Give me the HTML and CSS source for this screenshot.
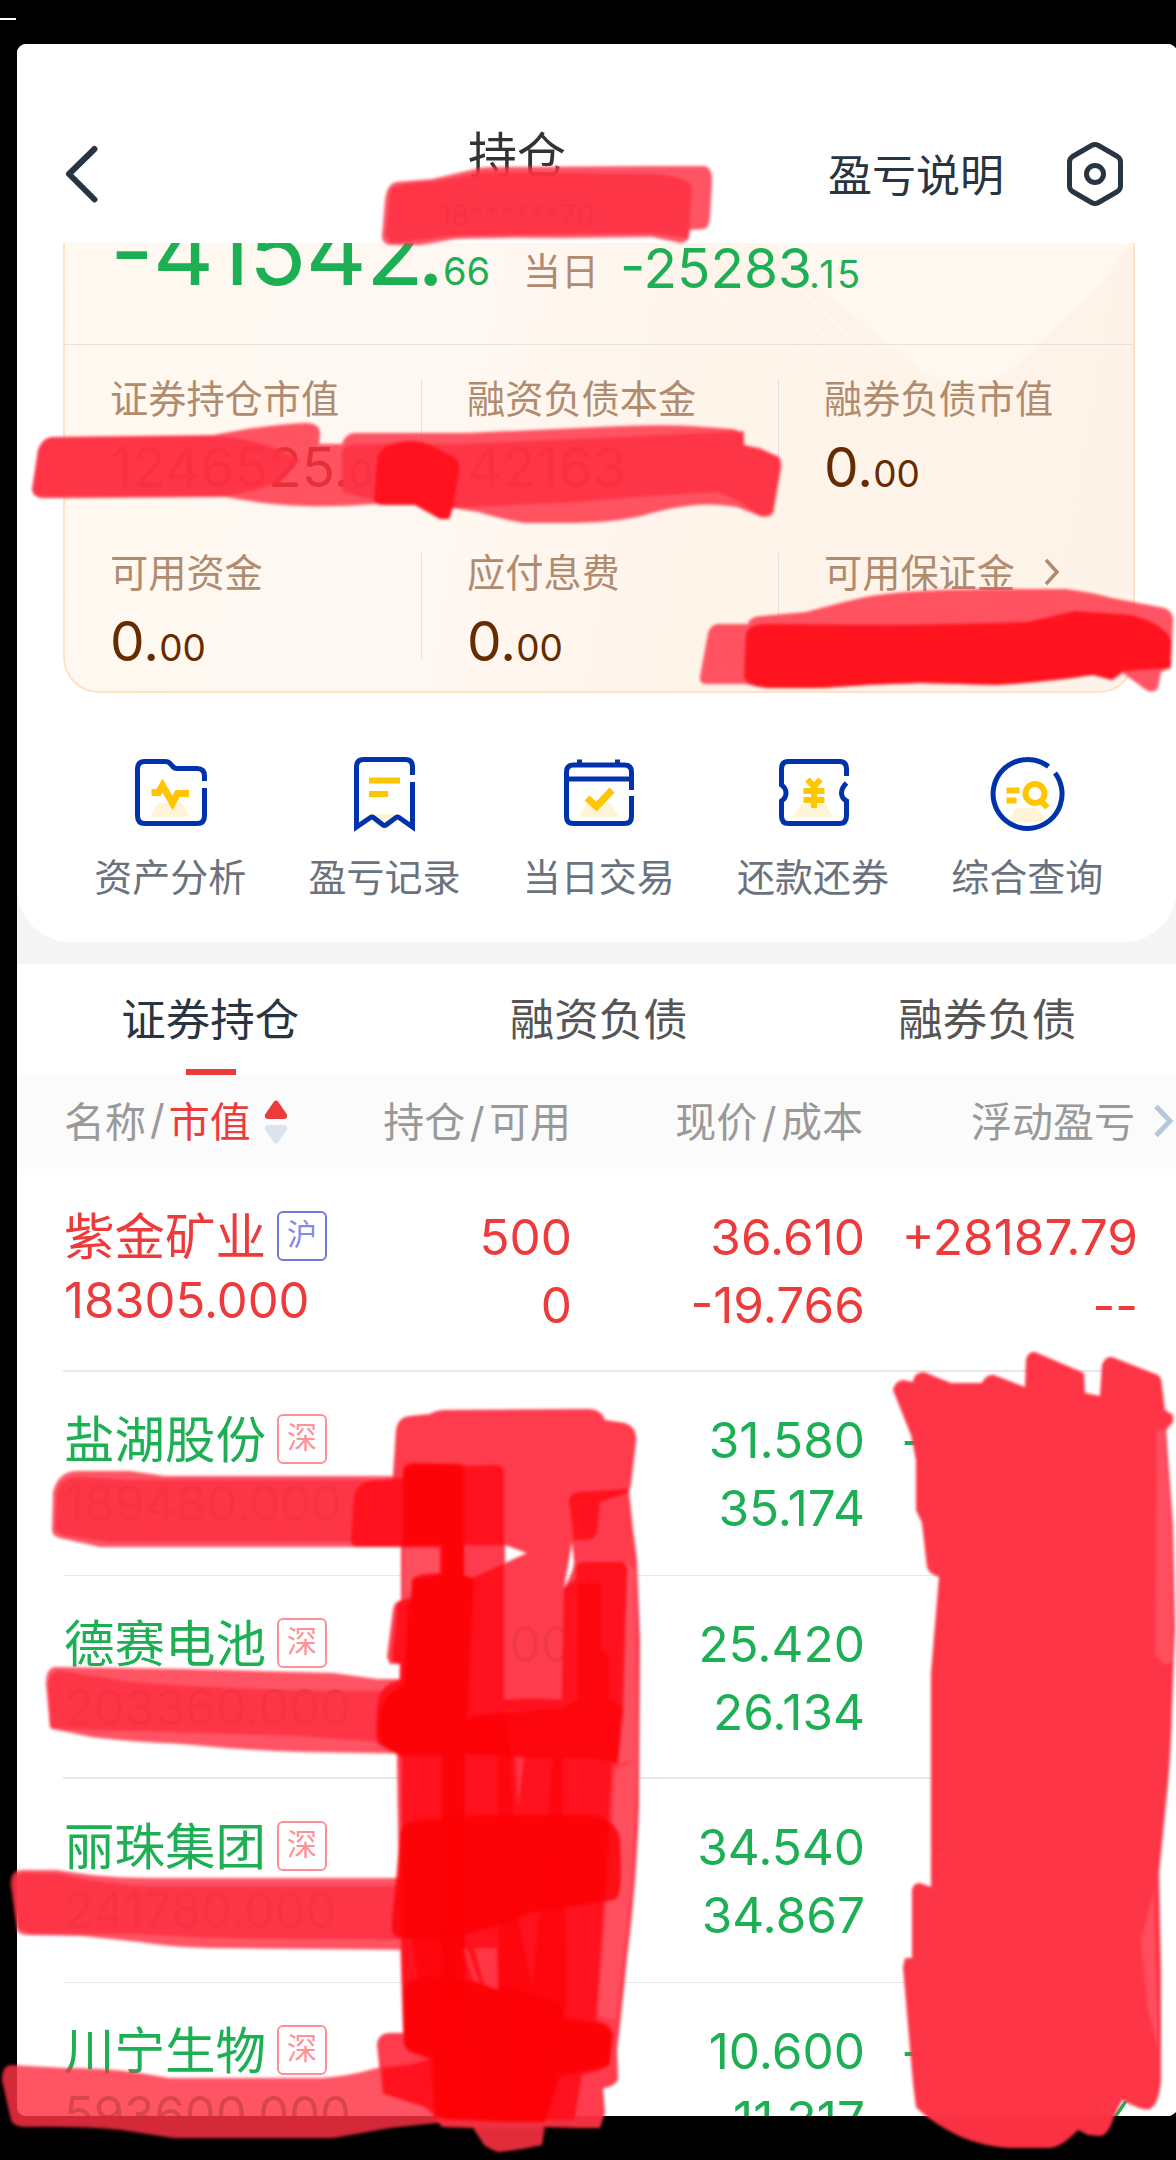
FILE: index.html
```html
<!DOCTYPE html>
<html lang="zh-CN">
<head>
<meta charset="utf-8">
<title>持仓</title>
<link rel="stylesheet" href="styles.css">
</head>
<body>
<i class="tick"></i>
<main class="screen">
  <header class="nav">
    <svg class="back" width="34" height="60" viewBox="0 0 34 60"><path d="M29.500 5L4 30l25.500 25.500"/></svg>
    <div class="title"><h1>持仓</h1><p>18******70</p></div>
    <div class="nav-right">
      <span>盈亏说明</span>
      <svg class="hex" width="58" height="66" viewBox="0 0 58 66"><path d="M25.500 4.500q3.500-2 7 0l19 11q3 2 3 5.500v24q0 3.500-3 5.500l-19 11q-3.500 2-7 0l-19-11q-3-2-3-5.500V21q0-3.500 3-5.500z"/><circle cx="29" cy="33" r="8.500"/></svg>
    </div>
  </header>

  <div class="top">
    <section class="card">
      <svg class="deco" width="1070" height="450" viewBox="0 0 1070 450">
        <path class="gem" d="M700 0L758 48L860 130Q905 154 945 128L1035 42L1064 0z"/>
        <path class="ray" d="M610 0Q650 62 735 110M650 0Q680 60 760 110M672 0Q705 58 785 110M702 0Q740 60 805 110"/>
      </svg>
      <div class="pnl">
        <b>-41542<span class="dot">.</span></b><span class="cents">66</span><span class="day">当日</span><span class="today">-25283</span><span class="today-c">.15</span>
      </div>
      <div class="grid">
        <div class="cell"><label>证券持仓市值</label><p>1246525.<small>00</small></p></div>
        <div class="cell"><label>融资负债本金</label><p>42163</p></div>
        <div class="cell"><label>融券负债市值</label><p>0.<small>00</small></p></div>
        <div class="cell"><label>可用资金</label><p>0.<small>00</small></p></div>
        <div class="cell"><label>应付息费</label><p>0.<small>00</small></p></div>
        <div class="cell"><label>可用保证金<svg width="16" height="28" viewBox="0 0 16 28"><path d="M2 2l11 12L2 26"/></svg></label><p></p></div>
      </div>
    </section>

    <nav class="tools">
      <a><svg width="80" height="80" viewBox="0 0 80 80">
        <path class="glow" d="M28 49h24l8 14H20z"/>
        <path class="line" d="M74.500 27V22q0-7.500-7.500-7.500H47q-3 0-5-3l-2-2Q38.500 7.500 35 7.500H15Q7.500 7.500 7.500 15v47q0 7.500 7.500 7.500h52q7.500 0 7.500-7.500V34"/>
        <path class="gold" d="M21.500 38.500h7l4-7 10 17.500 5-9.500h11.500"/></svg><span>资产分析</span></a>
      <a><svg width="80" height="80" viewBox="0 0 80 80">
        <path class="glow" d="M24 60h32l-8 12-8 3-8-3z"/>
        <path class="line" d="M68.500 21V13q0-7.500-7-7.500h-42q-7 0-7 7.500v60l14-9.500q1.500-1 3 0l9.500 7.500q1.500 1 3 0L52 63.500q1.500-1 3 0l13.500 9.500V28"/>
        <path class="gold slim" d="M25 26.500h31M25 40h19"/></svg><span>盈亏记录</span></a>
      <a><svg width="80" height="80" viewBox="0 0 80 80">
        <path class="glow" d="M28 49h24l8 14H20z"/>
        <path class="line" d="M72.500 36V18q0-7-7-7h-51q-7 0-7 7v44.500q0 7 7 7h51q7 0 7-7V42M7.500 25h65M20.500 11V5.500M58.500 11V5.500"/>
        <path class="gold" d="M28 44l9.500 8.500L53 36"/></svg><span>当日交易</span></a>
      <a><svg width="80" height="80" viewBox="0 0 80 80">
        <path class="glow" d="M28 50h24l8 13H20z"/>
        <path class="line" d="M73.500 22V15q0-7.500-7-7.500h-51q-7 0-7 7.500v16q4.500 3 4.500 8t-4.500 8v15q0 7.500 7 7.500h51q7 0 7-7.500V47q-5-3-5-8t5-10"/>
        <path class="gold slim" d="M34.500 25.500l6.500 7 6.500-7M30.500 37h21M30.500 46h21M41 32v22"/></svg><span>还款还券</span></a>
      <a><svg width="80" height="80" viewBox="0 0 80 80">
        <path class="glow" d="M29 54h22l9 14H20z"/>
        <path class="line" d="M61.500 12.500A34.500 34.500 0 1 0 68 19"/>
        <path class="gold slim" d="M19.500 36.500h13M19.500 46.500h10M54 47l6.500 6.500"/><circle class="gold slim" cx="48" cy="39.500" r="9.500"/></svg><span>综合查询</span></a>
    </nav>
  </div>

  <nav class="tabs"><span class="on">证券持仓</span><span>融资负债</span><span>融券负债</span></nav>

  <div class="cols head">
    <div class="c1">名称<i>/</i><em>市值</em><svg width="24" height="44" viewBox="0 0 24 44"><path fill="#ed3b3b" d="M10 1.500q2-2 4 0l9 13q1 4-3 4.500H4q-4-.5-3-4.500z"/><path fill="#dbe4ec" d="M10 42.500q2 2 4 0l9-13q1-4-3-4.500H4q-4 .5-3 4.500z"/></svg></div>
    <div>持仓<i>/</i>可用</div><div>现价<i>/</i>成本</div><div>浮动盈亏</div>
    <svg class="more" width="22" height="36" viewBox="0 0 22 36"><path d="M4 3.500l14 14.500L4 32.500"/></svg>
  </div>

  <section class="list">
    <article class="cols row up">
      <div class="c1"><h2>紫金矿业<span class="tag sh">沪</span></h2><p>18305.000</p></div>
      <div><p>500</p><p>0</p></div><div><p>36.610</p><p>-19.766</p></div><div><p class="gain">+28187.79</p><p>--</p></div>
    </article>
    <article class="cols row">
      <div class="c1"><h2>盐湖股份<span class="tag">深</span></h2><p>189480.000</p></div>
      <div></div><div><p>31.580</p><p>35.174</p></div><div><p class="neg">-</p></div>
    </article>
    <article class="cols row">
      <div class="c1"><h2>德赛电池<span class="tag">深</span></h2><p>203360.000</p></div>
      <div><p>00</p></div><div><p>25.420</p><p>26.134</p></div><div></div>
    </article>
    <article class="cols row">
      <div class="c1"><h2>丽珠集团<span class="tag">深</span></h2><p>241780.000</p></div>
      <div></div><div><p>34.540</p><p>34.867</p></div><div><p class="neg in">-</p></div>
    </article>
    <article class="cols row">
      <div class="c1"><h2>川宁生物<span class="tag">深</span></h2><p>593600.000</p></div>
      <div></div><div><p>10.600</p><p>11.317</p></div><div><p class="neg">-</p><p>%</p></div>
    </article>
  </section>
</main>

<svg class="marker" width="1176" height="2160" viewBox="0 0 1176 2160">
  <!-- account number -->
  <path class="m1" d="M382 236L385 200Q387 184 396 182L432 179L471 170Q480 167 490 167L660 166L704 166Q712 167 712 180L710 217Q709 228 704 229L690 230L689 238Q684 245 676 242L652 237L560 238Q500 237 455 239L421 245H390Q382 244 382 236z"/>
  <path class="m2" d="M386 236L390 190Q396 183 434 182L486 172L655 174Q692 178 692 188L688 238L652 233L560 234L450 236L392 243z"/>
  <!-- market value and principal -->
  <path class="m1" d="M32 490L38 450Q43 437 54 437L214 435Q270 424 308 423Q320 424 320 434L319 444H342Q345 434 354 433L467 433L600 427Q660 424 691 426L733 429Q744 431 744 445L760 448L779 457Q782 462 781 467L773 513Q768 519 760 516L737 507Q700 500 656 512Q620 523 576 523H524Q505 520 478 512L453 508L449 519H440L415 504H375Q340 507 306 506Q268 505 226 497L44 498Q34 498 32 490z"/>
  <path class="m2" d="M32 490L38 450Q43 437 54 437L214 436Q250 438 280 450L300 460L280 482Q250 493 226 496L44 498Q34 498 32 490z"/>
  <path class="m2" d="M342 450Q346 444 360 444H460L600 438L744 431V445L779 457L781 467L773 513L760 516L737 500L718 492Q640 496 576 502L453 508L375 500L342 492z"/>
  <path class="m3" d="M374 500L378 455Q384 442 410 441Q425 441 436 448L455 458Q460 462 459 470L453 507L449 519H440L415 505H383Q376 505 374 500z"/>
  <!-- margin -->
  <path class="m1" d="M700 677L708 633Q711 624 719 624H748Q750 616 762 616L806 612L844 602Q875 594 905 592Q950 589 997 589H1066Q1090 592 1112 598L1165 608Q1174 612 1173 622L1171 668L1161 672L1158 688Q1154 694 1146 690L1123 673L1112 680L1093 675L997 685L920 683Q870 684 821 688H767L744 684H706Q699 683 700 677z"/>
  <path class="m3" d="M744 675L746 633Q750 624 767 624L890 625Q960 624 1028 622L1075 611L1131 615Q1168 625 1171 642L1170 668L1123 671L1112 680L1093 675Q1050 682 997 685L920 683Q870 684 821 688H767Q745 686 744 675z"/>

  <!-- row values -->
  <path class="m1" d="M52 1530L53 1492Q58 1472 76 1471H130L165 1476H420V1547H100L60 1538Q52 1536 52 1530z"/>
  <path class="m2" d="M55 1530L57 1492Q60 1477 80 1477L130 1480H420V1542H110L62 1535z"/>
  <path class="m1" d="M50 1727L46 1684Q46 1667 56 1667L186 1669L334 1673L377 1679H420V1754L304 1752Q240 1750 182 1744Q130 1742 91 1737L58 1730Q51 1730 50 1727z"/>
  <path class="m2" d="M50 1727L48 1684Q50 1670 62 1671L130 1682Q260 1692 420 1691V1745L300 1736L58 1729z"/>
  <path class="m1" d="M17 1930L11 1887Q9 1870 22 1870H56L91 1875Q120 1878 152 1878H420V1950L208 1948Q170 1947 139 1942L82 1936L30 1935Q18 1935 17 1930z"/>
  <path class="m2" d="M17 1928L14 1887Q14 1873 24 1873L60 1874Q100 1884 150 1886H420V1940L208 1938L139 1934H30z"/>
  <path class="m1" d="M11 2120L2 2080Q2 2065 12 2065L65 2068Q100 2068 134 2072L169 2078H321Q350 2076 377 2068L434 2058L438 2123L390 2128L334 2138H173L121 2130Q80 2126 26 2127Q13 2127 11 2120z"/>

  <!-- quantity column -->
  <path class="m5 thin" fill-rule="evenodd" d="M393 1475L396 1430Q398 1417 410 1416L430 1414Q436 1410 446 1410L590 1409Q602 1410 605 1420L625 1423Q638 1428 636 1442L631 1484L629 1492L633 1530L637 1560L640 1640L639 1807Q636 1890 627 1957Q622 2010 617 2050L618 2080Q612 2088 603 2088L605 2113L600 2128H577L544 2127L542 2145Q520 2150 499 2152Q484 2148 481 2140L473 2128L442 2127L425 2107Q400 2098 382 2093L377 2045Q378 2033 390 2033H403L400 1940L397 1757L400 1664H390L387 1657L393 1610Q394 1602 401 1600V1547zM505 1545L527 1553L505 1563zM572 1542L564 1588Q575 1570 574 1560z"/>
  <path class="lite" d="M404 1548H440V1580L412 1590L404 1600zM616 1770L637 1760L632 1880L616 2020L598 2015L606 1910zM624 1560L635 1570L637 1760L614 1764z"/>
  <path class="m3" d="M351 1540L354 1496Q358 1482 372 1481L403 1478V1470Q403 1464 412 1463L460 1464L466 1466L498 1465Q504 1466 504 1474V1545H464V1577L474 1577L504 1564V1700Q530 1697 562 1700L564 1590Q568 1583 576 1580V1568Q576 1562 586 1562H622Q628 1564 627 1572L623 1700Q624 1712 622 1720L618 1764H612L607 1860Q602 1930 596 2020L606 2024Q614 2030 612 2040L610 2064Q600 2072 582 2074L574 2120H445L425 2107L384 2094L382 2068L412 2065L434 2058L404 2046L402 1940V1757L378 1744Q374 1735 378 1700Q382 1684 400 1680V1664L392 1660L398 1602L411 1598L412 1580Q416 1573 440 1573V1547H358Q350 1546 351 1540z"/>
  <path class="m3" d="M569 1500Q570 1493 580 1492L627 1489L629 1492L600 1502L597 1532Q594 1540 586 1540H574z"/>
  <path class="m4 deep" d="M403 1475Q405 1465 414 1464H458Q465 1466 464 1476V1575L474 1580L468 1700V1720L504 1712L512 1760L500 1755H465V2000H442V1755H400L383 1744Q376 1740 380 1710Q386 1692 404 1685L408 1605L412 1598V1580L442 1574V1545H403z"/>
  <path class="m4 mid" d="M578 1584H600V1650Q610 1652 609 1670V1700Q622 1702 622 1712L617 1762L590 1758L505 1757L470 1752V1715L530 1712Q535 1708 560 1710L578 1700z"/>
  <path class="m4 deep" d="M400 1835Q402 1821 416 1821L480 1815H592Q618 1820 620 1840L621 1870Q621 1898 614 1900L530 1913L500 1925L450 1938H400Q390 1936 392 1920L396 1880z"/>
  <path class="m4 deep" d="M404 1990Q406 1978 430 1977Q500 1982 560 2003L565 2018L600 2024Q614 2028 612 2040L608 2066L560 2076L545 2122H500L434 2118L432 2060L410 2052Q404 2048 404 2040z"/>
  <path class="m4 mid" d="M498 1757H510L520 1930L532 1990L545 1860L553 1757H562L566 2000L545 2120H500zM410 1935L440 1930L500 2118H448z"/>
  <path class="lite thin" d="M515 1757H524L518 1808zM463 1948L468 1950L480 1984L473 1980zM474 1948H497L498 1990L484 1985z"/>
  <path class="dim" d="M474 2128H546L542 2145Q520 2150 499 2152Q484 2148 481 2140z"/>

  <!-- profit column -->
  <path class="m5" d="M893 1390Q895 1381 903 1380L913 1382Q914 1372 924 1372Q938 1378 951 1383H982Q986 1374 994 1375L1025 1387L1026 1360Q1028 1351 1035 1352L1084 1373L1085 1393L1100 1396L1102 1365Q1105 1356 1112 1357L1158 1375Q1162 1378 1162 1387L1165 1410L1173 1415V1422L1166 1430L1173 1527L1175 1627L1172 1707Q1171 1750 1168 1783L1159 1873L1161 1973V2080Q1159 2104 1150 2109Q1144 2112 1122 2100L1114 2117Q1108 2136 1100 2136L1088 2135L1078 2130Q1062 2147 1050 2148H1010Q985 2147 961 2137Q930 2122 916 2107L913 2083L903 1967L905 1958H912V1890Q913 1883 920 1883L931 1887V1673L939 1577Q928 1573 927 1567L922 1523L916 1510V1460L911 1435z"/>
  <path class="lite" d="M1157 1430H1164L1172 1530L1173 1660L1166 1665L1155 1655zM1154 1890L1158 2050L1148 2010L1141 1940z"/>
</svg>
</body>
</html>
```
FILE: styles.css
```css
* { box-sizing: border-box; margin: 0; padding: 0; }
body {
  position: relative; width: 1176px; height: 2160px; overflow: hidden;
  padding: 44px 0 0 17px; background: #000;
  font-family: Inter, "Noto Sans CJK SC", sans-serif; color: #333;
}
svg { display: block; fill: none; flex: none; }
i, em, b { font-style: normal; }
.tick { position: absolute; left: 0; top: 18px; width: 16px; height: 2px; background: #fff; }
.screen { width: 1160px; height: 2072px; overflow: hidden; border-radius: 9px; background: #f5f5f5; }

.nav {
  display: grid; grid-template-columns: 352px 200px 1fr; align-items: center;
  height: 199px; padding: 61px 53px 0 48px; background: #fff;
}
.nav svg path, .nav svg circle { stroke: #283541; stroke-width: 5; stroke-linecap: round; stroke-linejoin: round; }
.nav .back path { stroke-width: 6; }
.title { height: 138px; text-align: center; padding-top: 14px; }
.title h1 { font-size: 49px; line-height: 74px; font-weight: 400; color: #333; }
.title p { font-size: 30px; line-height: 44px; color: #555; }
.nav-right { display: flex; justify-content: flex-end; align-items: center; gap: 62px; font-size: 44px; color: #283541; white-space: nowrap; }
.nav-right span { margin-top: -3px; }

.top { background: #fff; border-radius: 0 0 54px 54px; height: 699px; }
.card {
  position: relative; margin: 0 42px 0 46px; height: 450px; border: 2px solid #fde3c3; border-top: 0;
  border-radius: 0 0 36px 36px; overflow: hidden;
  background: linear-gradient(100deg, #fff9f1 0%, #fff7f1 38%, #fef4ea 60%, #fff3e9 100%);
}
.deco { position: absolute; left: 0; top: 0; }
.gem { fill: #fff9f3; opacity: .8; }
.ray { stroke: #fffaf5; stroke-width: 2; opacity: .7; }
.pnl {
  position: relative; display: flex; align-items: baseline; height: 102px; padding-left: 45px;
  border-bottom: 1px solid #e9e2da; color: #1daf54; white-space: nowrap;
}
.pnl > * { line-height: 0; }
.pnl::before { content: ""; height: 42px; width: 0; }
.pnl b { font-size: 95px; font-weight: 400; letter-spacing: -1px; width: 333px; }
.dot { margin-left: -6px; }
.cents { font-size: 38px; width: 80px; }
.day { font-size: 38px; width: 97px; color: #b08b6e; }
.today { font-size: 55px; width: 189px; position: relative; top: 3px; }
.today-c { font-size: 38px; letter-spacing: 2.500px; position: relative; top: 3px; }
.grid { position: relative; display: grid; grid-template-columns: repeat(3, 357px); grid-template-rows: 174px 174px; padding-top: 34px; margin-left: -1px; }
.cell { height: 106px; padding-left: 45px; border-left: 1px solid #e9e0d8; }
.cell:nth-child(3n+1) { border-color: transparent; }
.cell label { display: flex; align-items: center; height: 40px; margin-top: -3px; font-size: 38.200px; color: #b08b6e; white-space: nowrap; }
.cell label svg { margin: 3px 0 0 29px; }
.cell label path { stroke: #b08b6e; stroke-width: 3.500; }
.cell p { font-size: 55px; line-height: 80px; margin-top: 11px; color: #642c00; white-space: nowrap; }
.cell small { font-size: 37px; }

.tools { display: grid; grid-template-columns: repeat(5, 214.300px); padding: 61px 0 0 46px; }
.tools a { display: flex; flex-direction: column; align-items: center; }
.tools span { margin-top: 15px; font-size: 38px; line-height: 56px; color: #6b727d; }
.line { stroke: #0033ab; stroke-width: 5; }
.gold { stroke: #ffc600; stroke-width: 7; }
.gold.slim { stroke-width: 6; }
.glow { fill: #fff4d6; }

.tabs { display: grid; grid-template-columns: repeat(3, 388.500px); margin: 22px 0 0 -2px; padding-left: 2px; height: 111px; background: #fff; }
.tabs span { display: flex; flex-direction: column; align-items: center; font-size: 44.500px; line-height: 112px; color: #555; height: 111px; margin-left: -2px; }
.tabs .on { color: #283541; }
.tabs .on::after { content: ""; width: 50px; height: 6px; background: #ed3b3b; margin: -7px 0 0 2px; }

.cols { display: grid; grid-template-columns: 224px 285px 293px 273px; padding-left: 47px; text-align: right; }
.c1 { text-align: left; white-space: nowrap; }
.head { grid-template-columns: 224px 283px 292px 272px 40px; height: 94px; align-items: center; padding-bottom: 7px; background: #fbfbfb; font-size: 41px; color: #999; }
.head i { margin: 0 4.500px; }
.head .c1 { display: flex; align-items: center; }
.head .c1 i { margin: 0 4px; }
.head em { color: #ed3b3b; }
.head .c1 svg { margin: 7px 0 0 13px; }
.more { margin: 5px 0 0 17px; }
.more path { stroke: #b6c8d8; stroke-width: 5; }

.list { background: #fff; height: 950px; }
.row { position: relative; height: 203.400px; padding-top: 34px; color: #1daf54; font-size: 49.500px; }
.row > div { margin-right: 1px; }
.row::after { content: ""; position: absolute; left: 46px; right: 40px; bottom: 0; height: 2px; background: #e8e8e8; }
.row:nth-child(even)::after { height: 1px; }
.row.up { color: #ed3b3b; }
.row p { line-height: 68px; }
.row .c1 p { margin-top: -4px; font-size: 49px; }
.row h2 { display: flex; align-items: center; height: 68px; font-size: 50.500px; line-height: 60px; font-weight: 400; }
.tag {
  flex: none; width: 50px; height: 50px; margin: 0 0 2px 11px; border: 2px solid #ff9096; border-radius: 6px;
  font-size: 30px; line-height: 43px; text-align: center; color: #ff9096;
}
.tag.sh { border-color: #7479e0; color: #8589e6; }
.neg { margin-right: 214px; }
.neg.in { margin-right: 184px; }

.marker { position: absolute; left: 0; top: 0; filter: blur(1.500px); }
.m1 { fill: #ff3145; fill-opacity: .83; }
.m2 { fill: #fd3142; fill-opacity: .86; }
.m3 { fill: #ff101b; fill-opacity: .95; }
.m4 { fill: #fb0004; }
.m4.deep { fill-opacity: .8; }
.m4.mid { fill-opacity: .6; }
.m5 { fill: #fe3243; fill-opacity: .985; }
.m5.thin { fill-opacity: .95; }
.lite { fill: #ff5564; fill-opacity: .8; }
.lite.thin { fill: #ff4353; fill-opacity: .75; }
.dim { fill: #d42a38; fill-opacity: .5; }
```
